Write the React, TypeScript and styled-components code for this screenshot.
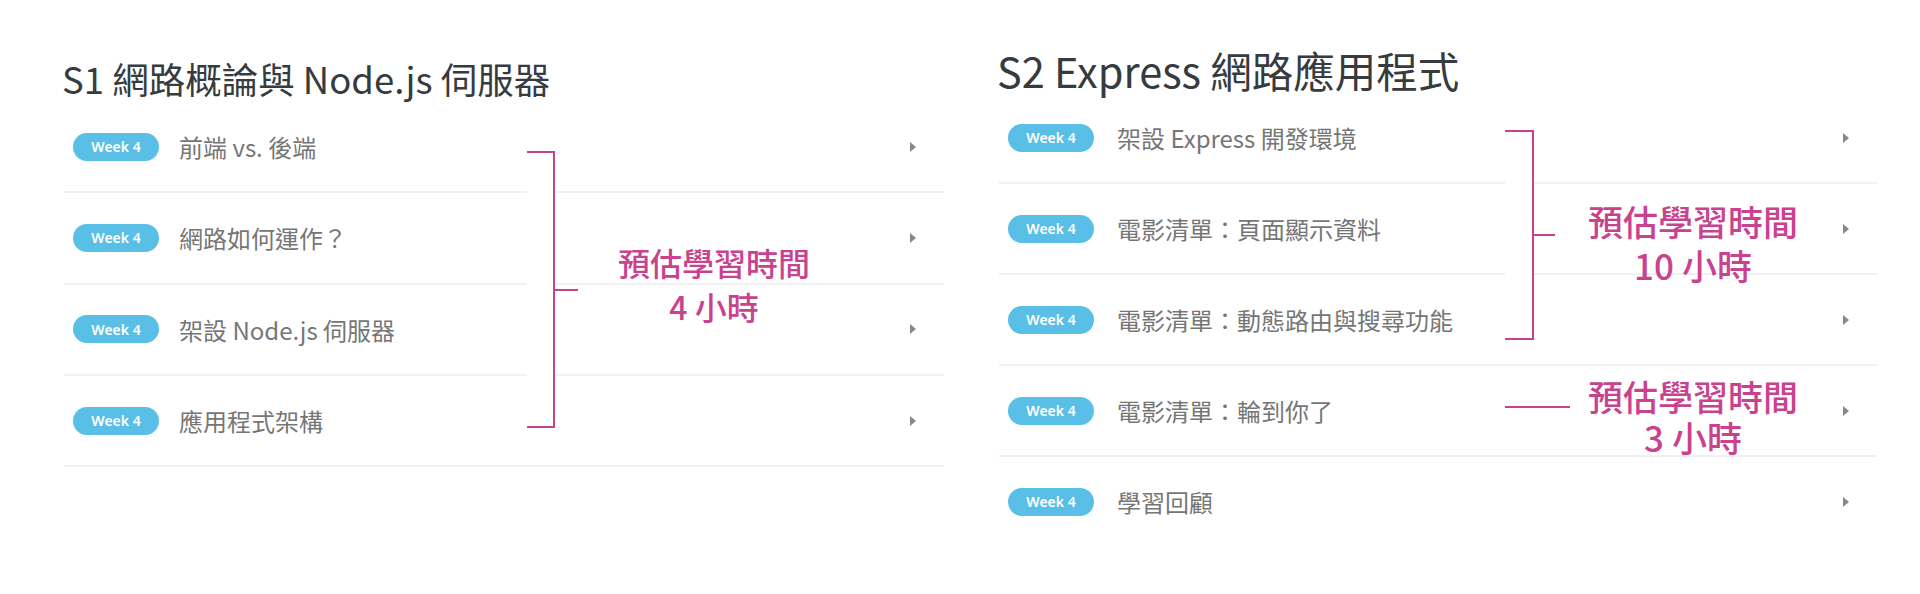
import React from "react"
import styled, { createGlobalStyle } from "styled-components"

const GlobalStyle = createGlobalStyle`
  html, body {
    margin: 0;
    padding: 0;
    background: #ffffff;
  }
  body {
    font-family: "Noto Sans CJK TC", "Noto Sans", sans-serif;
  }
`

const PINK = "#c9428e"

const Page = styled.div`
  position: relative;
  width: 1920px;
  height: 594px;
  display: flex;
  align-items: flex-start;
  overflow: hidden;
`

const Section = styled.section<{ $left: number; $width: number }>`
  margin-left: ${(p) => p.$left}px;
  width: ${(p) => p.$width}px;
  display: flex;
  flex-direction: column;
`

const Title = styled.h2<{ $size: number; $top: number }>`
  margin: ${(p) => p.$top}px 0 0 -2px;
  font-size: ${(p) => p.$size}px;
  line-height: 46px;
  font-weight: 400;
  color: #363b40;
  white-space: nowrap;
`

const List = styled.ul<{ $lastBorder: boolean }>`
  list-style: none;
  margin: 0;
  padding: 0;

  li:last-child {
    border-bottom-color: ${(p) => (p.$lastBorder ? "#f1f1f1" : "transparent")};
  }
`

const Row = styled.li<{ $height: number; $gap: number }>`
  box-sizing: border-box;
  height: ${(p) => p.$height}px;
  display: flex;
  align-items: center;
  gap: ${(p) => p.$gap}px;
  padding: 0 28px 0 9px;
  border-bottom: 2px solid #f1f1f1;
`

const Badge = styled.span`
  flex: none;
  width: 86px;
  height: 28px;
  border-radius: 14px;
  background: #59bfe7;
  color: #ffffff;
  font-family: "Noto Sans", sans-serif;
  font-size: 14px;
  font-weight: 600;
  display: flex;
  align-items: center;
  justify-content: center;
`

const Lesson = styled.span`
  flex: 1;
  font-size: 24px;
  color: #767676;
  white-space: nowrap;
`

const Arrow = styled.span`
  flex: none;
  width: 0;
  height: 0;
  border-left: 6px solid #8d8686;
  border-top: 5.5px solid transparent;
  border-bottom: 5.5px solid transparent;
`

const Bracket = styled.div<{ $tick: number }>`
  position: absolute;
  box-sizing: border-box;
  background: #ffffff;
  border: 2px solid ${PINK};
  border-left: none;

  &::after {
    content: "";
    position: absolute;
    left: 100%;
    top: calc(50% - 1px);
    width: ${(p) => p.$tick}px;
    height: 2px;
    background: ${PINK};
  }
`

const Dash = styled.div`
  position: absolute;
  height: 2px;
  background: ${PINK};
`

const Note = styled.div<{ $size: number; $line: number }>`
  position: absolute;
  width: 320px;
  text-align: center;
  color: ${PINK};
  font-size: ${(p) => p.$size}px;
  line-height: ${(p) => p.$line}px;
  font-weight: 500;
  white-space: nowrap;
`

const s1 = ["前端 vs. 後端", "網路如何運作？", "架設 Node.js 伺服器", "應用程式架構"]
const s2 = [
  "架設 Express 開發環境",
  "電影清單：頁面顯示資料",
  "電影清單：動態路由與搜尋功能",
  "電影清單：輪到你了",
  "學習回顧",
]

export default function App() {
  return (
    <>
      <GlobalStyle />
      <Page>
        <Section $left={64} $width={880}>
          <Title $size={36.5} $top={56}>
            S1 網路概論與 Node.js 伺服器
          </Title>
          <List $lastBorder>
            {s1.map((t) => (
              <Row key={t} $height={91.3} $gap={20}>
                <Badge>Week 4</Badge>
                <Lesson>{t}</Lesson>
                <Arrow />
              </Row>
            ))}
          </List>
        </Section>

        <Section $left={55} $width={878}>
          <Title $size={41.5} $top={47}>
            S2 Express 網路應用程式
          </Title>
          <List $lastBorder={false}>
            {s2.map((t) => (
              <Row key={t} $height={91} $gap={23}>
                <Badge>Week 4</Badge>
                <Lesson>{t}</Lesson>
                <Arrow />
              </Row>
            ))}
          </List>
        </Section>

        <Bracket $tick={25} style={{ left: 527, top: 151, width: 28, height: 277 }} />
        <Note $size={32} $line={44} style={{ left: 554, top: 240 }}>
          預估學習時間
          <br />4 小時
        </Note>

        <Bracket $tick={23} style={{ left: 1505, top: 130, width: 29, height: 210 }} />
        <Note $size={35} $line={44} style={{ left: 1533, top: 199 }}>
          預估學習時間
          <br />
          10 小時
        </Note>

        <Dash style={{ left: 1505, top: 406, width: 65 }} />
        <Note $size={35} $line={41} style={{ left: 1533, top: 375 }}>
          預估學習時間
          <br />3 小時
        </Note>
      </Page>
    </>
  )
}
